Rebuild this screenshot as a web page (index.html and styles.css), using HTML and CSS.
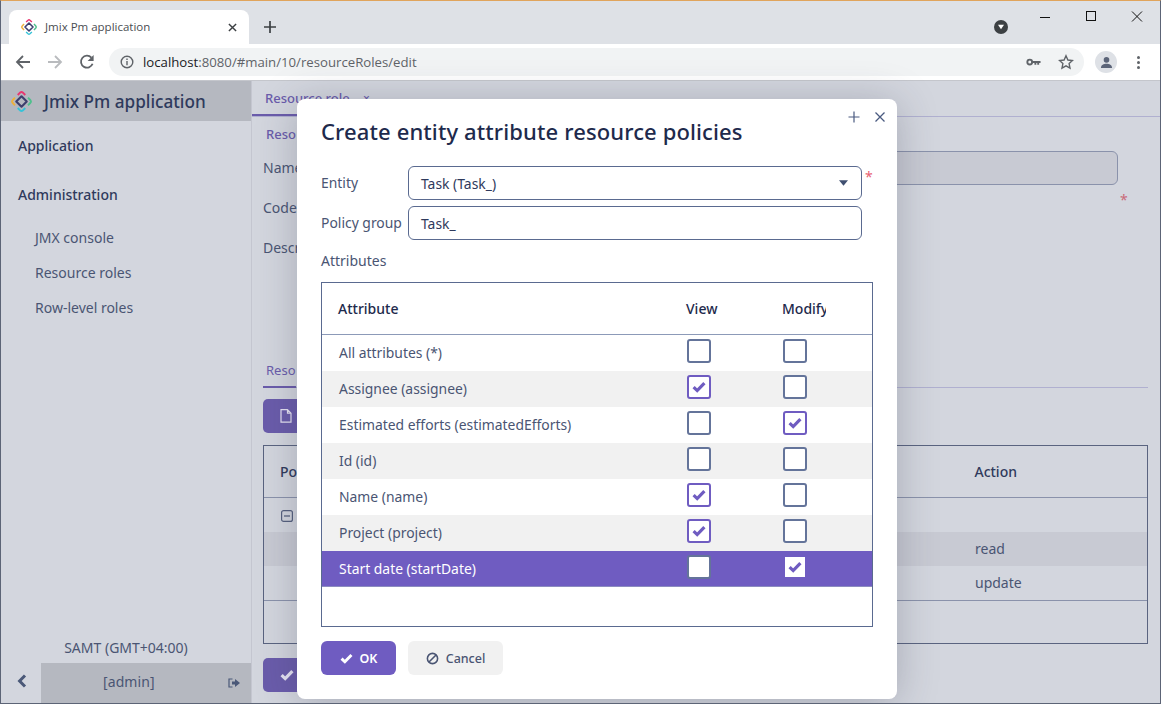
FILE: index.html
```html
<!DOCTYPE html>
<html lang="en">
<head>
<meta charset="utf-8">
<title>Jmix Pm application</title>
<link rel="stylesheet" href="styles.css">
</head>
<body>
<svg class="defs" width="0" height="0">
  <defs>
    <symbol id="logo" viewBox="0 0 20 20">
      <path d="M6.400 3.800 8.800 1.500Q10 .5 11.200 1.500L13.600 3.800" fill="none" stroke="#e8356f" stroke-width="1.800"/>
      <path d="M16.200 6.400 18.500 8.800Q19.500 10 18.500 11.200L16.200 13.600" fill="none" stroke="#4fc08d" stroke-width="1.800"/>
      <path d="M6.400 16.200 8.800 18.500Q10 19.500 11.200 18.500L13.600 16.200" fill="none" stroke="#35c3d8" stroke-width="1.800"/>
      <path d="M3.800 6.400 1.500 8.800Q.5 10 1.500 11.200L3.800 13.600" fill="none" stroke="#eeb03c" stroke-width="1.800"/>
      <path d="M10 5 15 10 10 15 5 10Z" fill="none" stroke="#3d3f6e" stroke-width="2" stroke-linejoin="round"/>
    </symbol>
    <symbol id="check" viewBox="0 0 14 12">
      <path d="M1.600 6.200 5.200 9.600 12.400 2.200" fill="none" stroke="currentColor" stroke-width="3.200"/>
    </symbol>
  </defs>
</svg>
<div class="window">
  <div class="tabstrip">
    <div class="tab">
      <svg class="tab-logo"><use href="#logo"/></svg>
      <span class="tab-title">Jmix Pm application</span>
      <svg class="tab-close" viewBox="0 0 10 10"><path d="M1 1l8 8M9 1l-8 8" stroke="#3c4043" stroke-width="1.600"/></svg>
    </div>
    <svg class="new-tab" viewBox="0 0 12 12"><path d="M6 0v12M0 6h12" stroke="#3c4043" stroke-width="1.700"/></svg>
    <div class="strip-right">
      <span class="media-dot"><svg viewBox="0 0 10 8"><path d="M1 1h8L5 7Z" fill="#fff"/></svg></span>
      <div class="win-controls">
        <svg viewBox="0 0 12 12"><path d="M1 6.500h10" stroke="#111" stroke-width="1"/></svg>
        <svg viewBox="0 0 12 12"><rect x="1.500" y=".5" width="9" height="9" fill="none" stroke="#111"/></svg>
        <svg viewBox="0 0 12 12"><path d="M1 .5l10 10M11 .5l-10 10" stroke="#111" stroke-width="1"/></svg>
      </div>
    </div>
  </div>
  <div class="toolbar">
    <svg class="nav" viewBox="0 0 16 16"><path d="M15 8H2M8 2 2 8l6 6" fill="none" stroke="#5f6368" stroke-width="1.800"/></svg>
    <svg class="nav" viewBox="0 0 16 16"><path d="M1 8h13M8 2l6 6-6 6" fill="none" stroke="#b9bbbe" stroke-width="1.800"/></svg>
    <svg class="nav" viewBox="0 0 16 16"><path d="M13.600 9.800A6 6 0 1 1 12.400 3.600" fill="none" stroke="#5f6368" stroke-width="1.800"/><path d="M14.600 1v6h-6Z" fill="#5f6368"/></svg>
    <div class="omnibox">
      <svg class="info" viewBox="0 0 14 14"><circle cx="7" cy="7" r="5.800" fill="none" stroke="#5f6368" stroke-width="1.400"/><path d="M7 6v4.200M7 3.600v1.500" stroke="#5f6368" stroke-width="1.400"/></svg>
      <span class="url">localhost<span class="url-rest">:8080/#main/10/resourceRoles/edit</span></span>
      <svg class="key" viewBox="0 0 16 10"><circle cx="4" cy="5" r="2.600" fill="none" stroke="#5f6368" stroke-width="2"/><path d="M6 4h9.500v2H14v2h-2V6h-1v2H9V6H6Z" fill="#5f6368"/></svg>
      <svg class="star" viewBox="0 0 16 16"><path d="M8 1.800 9.900 6l4.600.5-3.400 3.100.9 4.600L8 11.900l-4 2.300.9-4.600L1.500 6.500 6.100 6Z" fill="none" stroke="#5f6368" stroke-width="1.400"/></svg>
    </div>
    <span class="avatar"><svg viewBox="0 0 14 14"><circle cx="7" cy="4.200" r="3" fill="#5b6478"/><path d="M1 13c0-3.400 3-4.600 6-4.600s6 1.200 6 4.600Z" fill="#5b6478"/></svg></span>
    <span class="kebab"><i></i><i></i><i></i></span>
  </div>
  <div class="app">
    <aside class="sidebar">
      <div class="brand"><svg class="brand-logo"><use href="#logo"/></svg><span>Jmix Pm application</span></div>
      <nav class="menu">
        <div class="menu-top">Application</div>
        <div class="menu-top">Administration</div>
        <div class="menu-sub">JMX console</div>
        <div class="menu-sub">Resource roles</div>
        <div class="menu-sub">Row-level roles</div>
      </nav>
      <div class="timezone">SAMT (GMT+04:00)</div>
      <div class="userbar">
        <span class="collapse"><svg viewBox="0 0 10 14"><path d="M8 1.500 2.600 7 8 12.500" fill="none" stroke="#4a5878" stroke-width="3"/></svg></span>
        <span class="user"><span class="user-name">[admin]</span>
          <svg class="logout" viewBox="0 0 12 10"><path d="M4.500 1H1v8h3.500" fill="none" stroke="#4a5878" stroke-width="1.200"/><path d="M4 3.500h3V1l5 4-5 4V6.500H4Z" fill="#4a5878"/></svg>
        </span>
      </div>
    </aside>
    <main class="main">
      <div class="main-tabs"><span class="main-tab">Resource role <small>×</small></span></div>
      <div class="content">
        <div class="sub-tab-top">Reso</div>
        <div class="field-row field-name"><span>Name</span><span class="bg-input"></span></div>
        <div class="field-row field-code"><span>Code</span><span class="bg-star">*</span></div>
        <div class="field-row field-desc"><span>Descr</span></div>
        <div class="policies-tabs"><span>Reso</span></div>
        <div class="bg-btn bg-create"><svg viewBox="0 0 12 14"><path d="M1 .7h6.500L11 4.200v9H1Z M7.500 .7v3.500H11" fill="none" stroke="#e6e3f3" stroke-width="1.200"/></svg></div>
        <div class="bg-table">
          <div class="bg-head"><span>Po</span><span class="bg-action">Action</span></div>
          <div class="bg-tree"><svg viewBox="0 0 12 12"><rect x=".6" y=".6" width="10.800" height="10.800" rx="2" fill="none" stroke="#55607e" stroke-width="1.200"/><path d="M3 6h6" stroke="#55607e" stroke-width="1.300"/></svg></div>
          <div class="bg-row bg-row-sel"><span>read</span></div>
          <div class="bg-row bg-row-last"><span>update</span></div>
        </div>
        <div class="bg-btn bg-ok"><svg viewBox="0 0 14 12"><use href="#check"/></svg></div>
      </div>
    </main>
  </div>
  <section class="modal">
    <div class="modal-tools">
      <svg viewBox="0 0 12 12"><path d="M6 .5v11M.5 6h11" stroke="#4a5a80" stroke-width="1.200"/></svg>
      <svg viewBox="0 0 12 12"><path d="M1.500 1.500l9 9M10.500 1.500l-9 9" stroke="#4a5a80" stroke-width="1.300"/></svg>
    </div>
    <h1 class="modal-title">Create entity attribute resource policies</h1>
    <div class="form">
      <label class="form-label">Entity</label>
      <div class="control select">Task (Task_)
        <svg class="caret" viewBox="0 0 10 6"><path d="M0 0h10L5 6Z" fill="#3f4f70"/></svg>
        <span class="required">*</span>
      </div>
      <label class="form-label">Policy group</label>
      <div class="control">Task_</div>
    </div>
    <div class="attr-label">Attributes</div>
    <div class="grid">
      <div class="grid-head">
        <span class="col-name">Attribute</span>
        <span class="col-check">View</span>
        <span class="col-check col-clip">Modify</span>
      </div>
      <div class="grid-row"><span class="col-name cell">All attributes (*)</span><span class="col-check"><span class="box"></span></span><span class="col-check"><span class="box"></span></span></div>
      <div class="grid-row alt"><span class="col-name cell">Assignee (assignee)</span><span class="col-check"><span class="box on"><svg viewBox="0 0 14 12"><use href="#check"/></svg></span></span><span class="col-check"><span class="box"></span></span></div>
      <div class="grid-row"><span class="col-name cell">Estimated efforts (estimatedEfforts)</span><span class="col-check"><span class="box"></span></span><span class="col-check"><span class="box on"><svg viewBox="0 0 14 12"><use href="#check"/></svg></span></span></div>
      <div class="grid-row alt"><span class="col-name cell">Id (id)</span><span class="col-check"><span class="box"></span></span><span class="col-check"><span class="box"></span></span></div>
      <div class="grid-row"><span class="col-name cell">Name (name)</span><span class="col-check"><span class="box on"><svg viewBox="0 0 14 12"><use href="#check"/></svg></span></span><span class="col-check"><span class="box"></span></span></div>
      <div class="grid-row alt"><span class="col-name cell">Project (project)</span><span class="col-check"><span class="box on"><svg viewBox="0 0 14 12"><use href="#check"/></svg></span></span><span class="col-check"><span class="box"></span></span></div>
      <div class="grid-row selected"><span class="col-name cell">Start date (startDate)</span><span class="col-check"><span class="box"></span></span><span class="col-check"><span class="box flat"><svg viewBox="0 0 14 12"><use href="#check"/></svg></span></span></div>
    </div>
    <div class="modal-actions">
      <button class="btn btn-primary"><svg viewBox="0 0 14 12"><use href="#check"/></svg>OK</button>
      <button class="btn btn-plain"><svg viewBox="0 0 14 14"><circle cx="7" cy="7" r="5.500" fill="none" stroke="currentColor" stroke-width="1.700"/><path d="M3.200 10.800 10.800 3.200" stroke="currentColor" stroke-width="1.700"/></svg>Cancel</button>
    </div>
  </section>
</div>
</body>
</html>
```
FILE: styles.css
```css
* { box-sizing: border-box; }
html, body { margin: 0; padding: 0; }
body { width: 1161px; height: 704px; overflow: hidden; font-family: "Noto Sans", "Open Sans", sans-serif; color: #4a5573; }
.defs { position: absolute; }
.window { position: relative; width: 1161px; height: 704px; display: flex; flex-direction: column; border: 1px solid #5c6476; border-top: 1px solid #e0a45c; overflow: hidden; }

.tabstrip { height: 43px; background: #dee1e6; display: flex; align-items: flex-end; padding-left: 8px; flex: none; }
.tab { width: 240px; height: 34px; background: #fff; border-radius: 8px 8px 0 0; display: flex; align-items: center; padding-left: 12px; }
.tab-logo { width: 16px; height: 16px; margin-right: 8px; }
.tab-title { flex: 1; font: 11.5px "Open Sans", sans-serif; color: #4a4d52; padding-bottom: 2px; }
.tab-close { width: 9px; height: 9px; margin-right: 12px; }
.new-tab { width: 12px; height: 12px; margin: 0 0 11px 15px; }
.strip-right { flex: 1; align-self: stretch; position: relative; display: flex; justify-content: flex-end; }
.media-dot { position: absolute; left: 718px; top: 19px; width: 14px; height: 14px; border-radius: 50%; background: #3c4043; display: flex; align-items: center; justify-content: center; }
.media-dot svg { width: 8px; height: 6px; }
.win-controls { display: flex; gap: 34px; padding: 10px 17px 0 0; height: 30px; }
.win-controls svg { width: 12px; height: 12px; }

.toolbar { height: 37px; background: #fff; border-bottom: 1px solid #c4c6cc; display: flex; align-items: center; padding: 0 0 0 6px; flex: none; }
.nav { width: 16px; height: 16px; margin: 0 8px 0 8px; }
.omnibox { width: 975px; height: 28px; margin-left: 6px; border-radius: 14px; background: #f1f3f4; display: flex; align-items: center; padding: 0 9px 0 11px; }
.info { width: 14px; height: 14px; margin-right: 9px; }
.url { flex: 1; font: 13.2px "Open Sans", sans-serif; color: #202124; }
.url-rest { color: #5f6368; }
.key { width: 15px; height: 10px; margin-right: 17px; }
.star { width: 16px; height: 16px; margin-right: 1px; }
.avatar { width: 22px; height: 22px; margin-left: 11px; border-radius: 50%; background: #dee1e6; display: flex; align-items: center; justify-content: center; }
.avatar svg { width: 13px; height: 13px; }
.kebab { display: flex; flex-direction: column; gap: 2px; margin-left: 20px; }
.kebab i { display: block; width: 3px; height: 3px; border-radius: 50%; background: #5f6368; }

.app { flex: 1; display: flex; min-height: 0; }
.sidebar { width: 250px; background: #d3d6de; display: flex; flex-direction: column; flex: none; }
.brand { height: 40px; background: #b5b8c0; display: flex; align-items: center; padding-left: 10px; font-size: 17.150px; font-weight: 500; color: #2f3a5c; flex: none; }
.brand-logo { width: 21px; height: 21px; margin-right: 12px; }
.menu { flex: 1; padding-top: 14px; }
.menu-top { font-size: 14px; font-weight: 500; color: #2f3a5c; height: 21px; line-height: 21px; margin: 0 0 28px 17px; }
.menu-sub { font-size: 14px; height: 35px; line-height: 21px; padding-left: 34px; color: #4a5573; }
.menu-top + .menu-sub { margin-top: -6px; }
.timezone { font-size: 14px; text-align: center; height: 20px; line-height: 20px; margin-bottom: 5px; color: #4a5573; }
.userbar { height: 40px; display: flex; flex: none; }
.collapse { width: 42px; display: flex; align-items: center; justify-content: center; padding-bottom: 4px; margin-right: -2px; }
.collapse svg { width: 10px; height: 14px; }
.user { flex: 1; background: #b5b8c0; display: flex; align-items: center; font-size: 14px; color: #4a5573; padding-left: 62px; }
.user-name { flex: 1; padding-bottom: 3px; letter-spacing: .1px; }
.logout { width: 12px; height: 10px; margin-right: 11px; }

.main { flex: 1; background: #d3d6de; display: flex; flex-direction: column; min-width: 0; border-left: 1px solid #c4c6d0; }
.main-tabs { height: 36px; border-bottom: 1px solid #b0b0d0; padding-top: 8px; font-size: 13px; font-weight: 500; color: #6a5cab; flex: none; }
.main-tab { display: inline-block; height: 27px; padding-left: 13px; border-bottom: 2px solid #6a5cab; }
.main-tab small { font-size: 12px; margin-left: 10px; }
.content { padding: 7px 12px 0 11px; flex: 1; display: flex; flex-direction: column; font-size: 14px; }
.sub-tab-top { height: 26px; line-height: 20px; font-size: 13px; font-weight: 500; color: #6a5cab; padding-left: 3px; }
.field-row { display: flex; height: 40px; align-items: center; position: relative; }
.field-name { height: 34px; }
.field-code { margin-top: 6px; height: 34px; }
.field-desc { height: 34px; margin-top: 6px; }
.bg-input { position: absolute; left: 145px; right: 30px; top: 1px; height: 34px; background: #c8cad3; border: 1px solid #8a92ab; border-radius: 6px; }
.bg-star { position: absolute; left: 857px; top: 0; color: #c96a78; }
.policies-tabs { height: 29px; margin-top: 95px; border-bottom: 1px solid #b0b0d0; font-size: 13px; color: #6a5cab; }
.policies-tabs span { display: inline-block; height: 29px; line-height: 22px; padding-left: 3px; border-bottom: 2px solid #6a5cab; }
.bg-btn { width: 110px; height: 34px; background: #6a5cab; border-radius: 5px; display: flex; align-items: center; padding-left: 17px; flex: none; color: #e6e3f3; }
.bg-btn svg { width: 12px; height: 14px; }
.bg-create { margin-top: 11px; }
.bg-table { height: 199px; margin-top: 12px; border: 1px solid #5a6480; flex: none; }
.bg-head { height: 52px; border-bottom: 1px solid #8a92ab; display: flex; align-items: center; justify-content: space-between; padding: 0 130px 0 16px; font-weight: 500; color: #2f3a5c; }
.bg-tree { height: 34px; padding: 12px 0 0 17px; }
.bg-tree svg { width: 12px; height: 12px; display: block; }
.bg-row { height: 34px; line-height: 34px; padding-left: 711px; }
.bg-row-sel { background: #c8cad3; }
.bg-row-last { height: 35px; border-bottom: 1px solid #8a92ab; }
.bg-ok { margin-top: 14px; }
.bg-ok svg { width: 14px; height: 12px; }

.modal { position: absolute; left: 296px; top: 98px; width: 600px; height: 600px; background: #fff; border-radius: 8px; box-shadow: 0 4px 40px rgba(50, 55, 75, .28); padding: 16px 24px 0; display: flex; flex-direction: column; }
.modal-tools { position: absolute; top: 12px; right: 11px; display: flex; gap: 14px; }
.modal-tools svg { width: 12px; height: 12px; display: block; }
.modal-title { margin: 0; font-size: 22px; font-weight: 500; line-height: 32px; color: #1e2a4c; letter-spacing: .12px; }
.form { display: grid; grid-template-columns: 87px 454px; gap: 6px 0; margin-top: 19px; font-size: 13.900px; }
.form-label { line-height: 34px; height: 34px; color: #4a5573; }
.control { position: relative; height: 34px; line-height: 34px; border: 1px solid #5a6a90; border-radius: 6px; padding-left: 12px; color: #2f3a5c; }
.caret { position: absolute; right: 13px; top: 13px; width: 9px; height: 6px; }
.required { position: absolute; left: 456px; top: -6px; color: #e8606f; font-size: 14px; line-height: 32px; }
.attr-label { font-size: 14px; line-height: 20px; margin-top: 11px; color: #4a5573; }
.grid { width: 552px; height: 345px; margin-top: 11px; border: 1px solid #5a6a90; flex: none; font-size: 13.900px; overflow: hidden; }
.grid-head { display: flex; height: 52px; align-items: center; border-bottom: 1px solid #8c9ab8; font-weight: 500; color: #1e2a4c; font-size: 14px; }
.grid-row { display: flex; height: 36px; align-items: center; color: #4a5573; }
.grid-row .cell { padding-bottom: 2px; }
.col-name { width: 364px; padding-left: 16px; flex: none; }
.cell { padding-left: 17px; }
.col-check { width: 96px; display: flex; flex: none; }
.col-clip { width: 44px; overflow: hidden; }
.alt { background: #f1f1f1; }
.selected { background: #6f5cc1; color: #fff; border-bottom: 1px solid #8c8cc0; }
.selected .cell { padding-bottom: 0; }
.box { width: 24px; height: 24px; border: 2px solid #64749a; border-radius: 3px; background: #fff; display: flex; align-items: center; justify-content: center; margin-left: 1px; margin-top: -4px; }
.box svg { width: 14px; height: 12px; color: #6f5cc1; }
.box.on { border-color: #6f5cc1; }
.box.flat { border: 0; width: 20px; height: 20px; border-radius: 0; margin-left: 3px; }
.modal-actions { display: flex; gap: 12px; margin-top: 14px; }
.btn { height: 34px; border: 0; border-radius: 6px; display: flex; align-items: center; justify-content: center; font: 500 12.500px "Noto Sans", sans-serif; padding: 0; }
.btn svg { flex: none; }
.btn-primary { width: 75px; background: #6f5cc1; color: #fff; font-weight: 600; gap: 7px; }
.btn-primary svg { width: 13px; height: 11px; }
.btn-plain { width: 95px; background: #f1f1f1; color: #4a5573; gap: 7px; }
.btn-plain svg { width: 13px; height: 13px; }
```
